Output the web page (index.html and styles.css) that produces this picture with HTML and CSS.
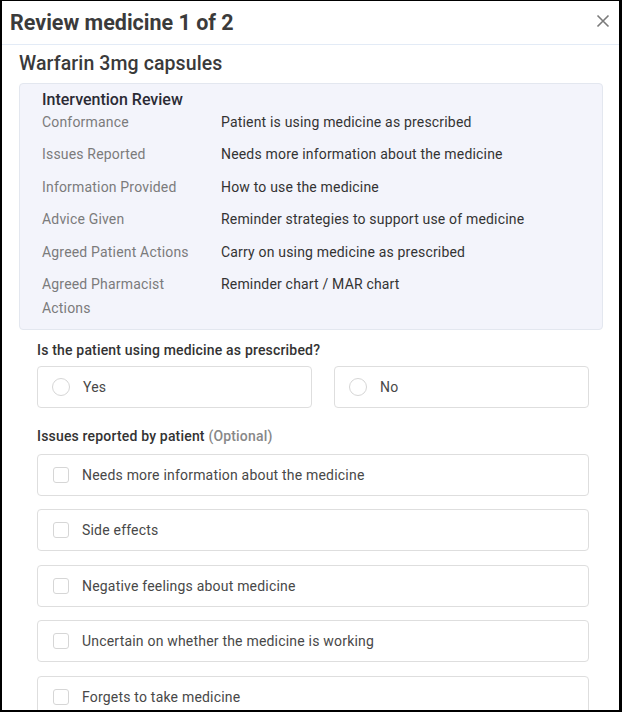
FILE: index.html
```html
<!DOCTYPE html>
<html lang="en">

<head>
    <meta charset="UTF-8">
    <meta name="viewport" content="width=device-width, initial-scale=1.0">
    <title>Review medicine</title>
    <link rel="stylesheet" href="styles.css">
</head>

<body>
    <div class="dialog">
        <div class="dialog-header">
            <h1>Review medicine 1 of 2</h1>
            <button class="close" type="button" aria-label="Close">
                <svg width="14" height="14" viewBox="0 0 14 14">
                    <path d="M1.5 1.5 L12.5 12.5 M12.5 1.5 L1.5 12.5" stroke="#7a7a7a" stroke-width="1.6" fill="none" />
                </svg>
            </button>
        </div>

        <div class="dialog-body">
            <h2 class="medicine-name">Warfarin 3mg capsules</h2>

            <div class="review-panel">
                <h3>Intervention Review</h3>
                <div class="review-grid">
                    <div class="review-label">Conformance</div>
                    <div class="review-value">Patient is using medicine as prescribed</div>
                    <div class="review-label">Issues Reported</div>
                    <div class="review-value">Needs more information about the medicine</div>
                    <div class="review-label">Information Provided</div>
                    <div class="review-value">How to use the medicine</div>
                    <div class="review-label">Advice Given</div>
                    <div class="review-value">Reminder strategies to support use of medicine</div>
                    <div class="review-label">Agreed Patient Actions</div>
                    <div class="review-value">Carry on using medicine as prescribed</div>
                    <div class="review-label">Agreed Pharmacist Actions</div>
                    <div class="review-value">Reminder chart / MAR chart</div>
                </div>
            </div>

            <div class="form">
                <p class="question">Is the patient using medicine as prescribed?</p>
                <div class="radio-row">
                    <label class="option"><input type="radio" name="conformance" value="yes"> Yes</label>
                    <label class="option"><input type="radio" name="conformance" value="no"> No</label>
                </div>

                <p class="question issues-title">Issues reported by patient <span class="optional">(Optional)</span></p>
                <div class="checkbox-list">
                    <label class="option"><input type="checkbox" name="issues"> Needs more information about the medicine</label>
                    <label class="option"><input type="checkbox" name="issues"> Side effects</label>
                    <label class="option"><input type="checkbox" name="issues"> Negative feelings about medicine</label>
                    <label class="option"><input type="checkbox" name="issues"> Uncertain on whether the medicine is working</label>
                    <label class="option"><input type="checkbox" name="issues"> Forgets to take medicine</label>
                </div>
            </div>
        </div>
    </div>
</body>

</html>
```

FILE: styles.css
```css
body {
    margin: 0;
    font-family: "Roboto", "Liberation Sans", sans-serif;
    color: #333;
    background: #000;
}

.dialog {
    box-sizing: border-box;
    height: 709px;
    overflow: hidden;
    background: #fff;
    margin: 1px 3px 0 2px;
}

.dialog-header {
    height: 43px;
    display: flex;
    align-items: center;
    justify-content: space-between;
    padding: 0 9px 0 8px;
    border-bottom: 1px solid #e3ebf6;
}

.dialog-header h1 {
    margin: 0;
    font-size: 21.5px;
    font-weight: 700;
    color: #3b3b3b;
}

.close {
    border: none;
    background: none;
    padding: 0;
    width: 14px;
    height: 14px;
    display: flex;
    margin-top: -4px;
}

.dialog-body {
    padding: 0 16px 0 17px;
}

.medicine-name {
    margin: 0;
    padding: 7px 0 0;
    height: 31px;
    font-size: 19.5px;
    font-weight: 500;
    line-height: 24px;
    letter-spacing: 0.1px;
    color: #3a3a3a;
}

.review-panel {
    background: #f3f4fb;
    border: 1px solid #e3e7ef;
    border-radius: 4px;
    padding: 6px 22px 9px;
}

.review-panel h3 {
    margin: 0;
    font-size: 16px;
    font-weight: 500;
    line-height: 20px;
    color: #2b2b35;
}

.review-grid {
    display: grid;
    grid-template-columns: 179px 1fr;
    row-gap: 8.4px;
    font-size: 14px;
    line-height: 24px;
    letter-spacing: 0.18px;
}

.review-label {
    color: #7b7b7b;
    padding-right: 20px;
}

.review-value {
    color: #333;
}

.form {
    padding: 0 14px 0 18px;
}

.question {
    margin: 10px 0 6px;
    font-size: 14px;
    font-weight: 500;
    line-height: 20px;
    letter-spacing: 0.18px;
    color: #333;
}

.issues-title {
    margin: 18px 0 8px;
}

.optional {
    color: #888;
}

.radio-row {
    display: grid;
    grid-template-columns: 1fr 255px;
    gap: 22px;
}

.checkbox-list {
    display: flex;
    flex-direction: column;
    gap: 13.5px;
}

.option {
    box-sizing: border-box;
    height: 42px;
    display: flex;
    align-items: center;
    gap: 13px;
    padding: 0 14px;
    border: 1px solid #dedede;
    border-radius: 4px;
    font-size: 14px;
    letter-spacing: 0.2px;
    color: #484848;
}

.option input {
    appearance: none;
    margin: 0;
    flex: none;
    border: 1px solid #d6d6d6;
    background: #fff;
}

.option input[type=radio] {
    width: 18px;
    height: 18px;
    border-radius: 50%;
}

.option input[type=checkbox] {
    width: 16px;
    height: 16px;
    border-radius: 3px;
    margin-left: 1px;
}
```
